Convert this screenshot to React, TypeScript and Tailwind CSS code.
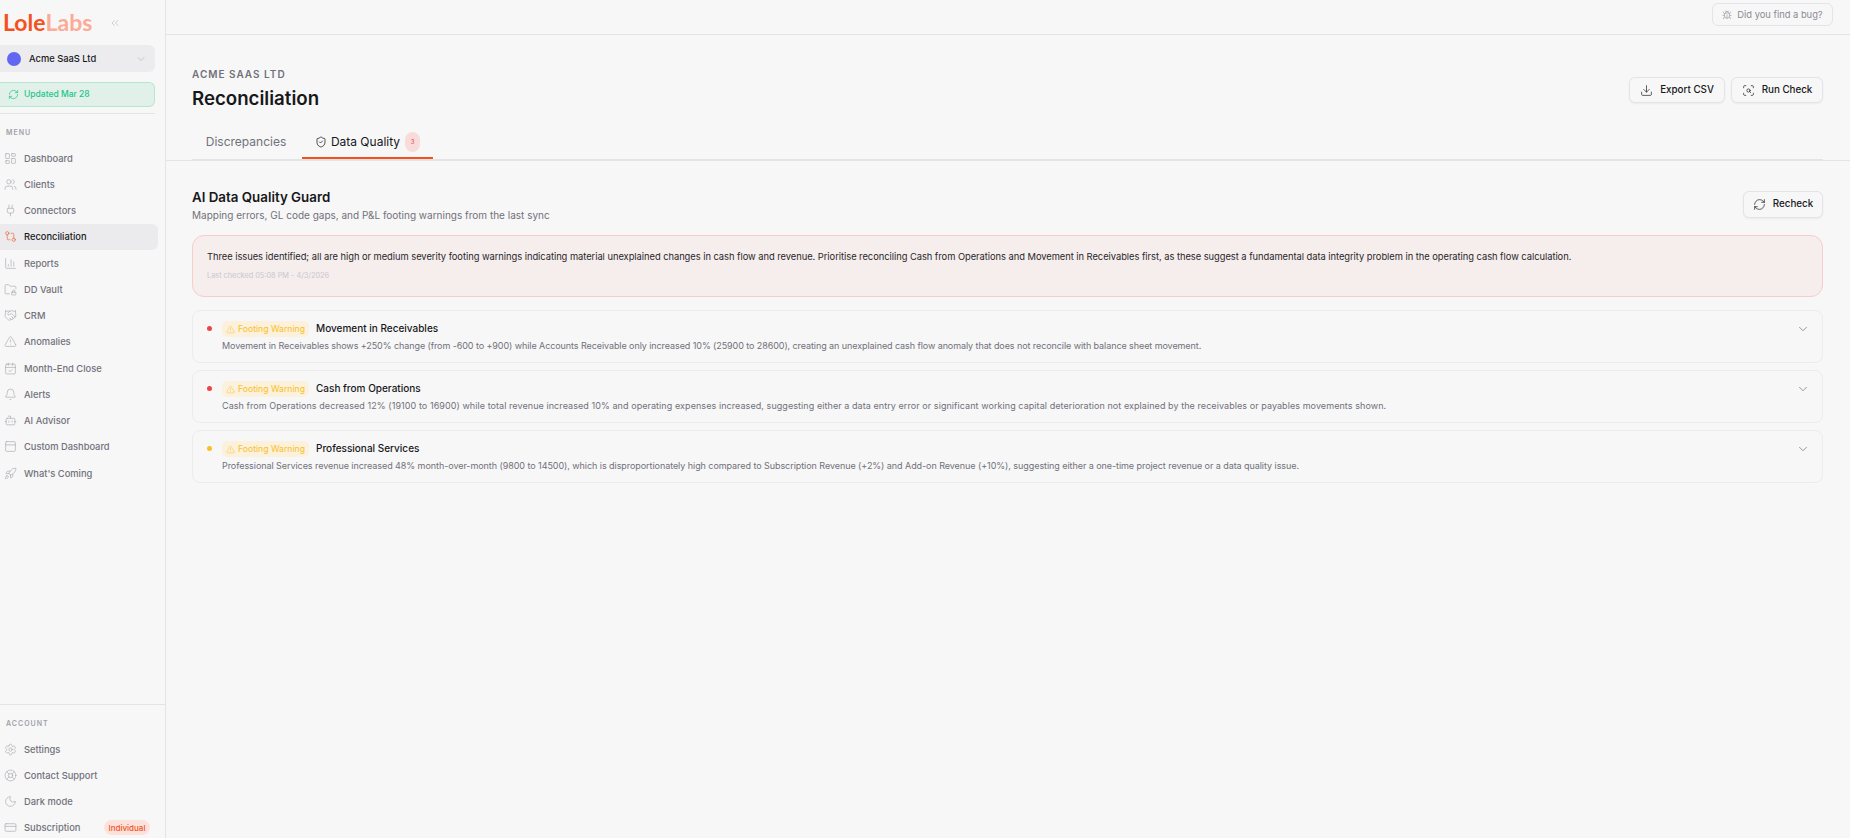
import {
  AlertTriangle,
  BarChart3,
  Bell,
  Bot,
  Bug,
  CalendarCheck,
  ChevronDown,
  ChevronsLeft,
  CreditCard,
  Download,
  FolderLock,
  GitCompare,
  Handshake,
  LayoutDashboard,
  LifeBuoy,
  Moon,
  PanelTop,
  Plug,
  RefreshCw,
  Rocket,
  ScanSearch,
  Settings,
  ShieldCheck,
  Users,
} from "lucide-react"

const menu = [
  { label: "Dashboard", icon: LayoutDashboard },
  { label: "Clients", icon: Users },
  { label: "Connectors", icon: Plug },
  { label: "Reconciliation", icon: GitCompare, active: true },
  { label: "Reports", icon: BarChart3 },
  { label: "DD Vault", icon: FolderLock },
  { label: "CRM", icon: Handshake },
  { label: "Anomalies", icon: AlertTriangle },
  { label: "Month-End Close", icon: CalendarCheck },
  { label: "Alerts", icon: Bell },
  { label: "AI Advisor", icon: Bot },
  { label: "Custom Dashboard", icon: PanelTop },
  { label: "What's Coming", icon: Rocket },
]

const account = [
  { label: "Settings", icon: Settings },
  { label: "Contact Support", icon: LifeBuoy },
  { label: "Dark mode", icon: Moon },
]

const issues = [
  {
    dot: "bg-[#ef4444]",
    spacing: "tracking-[-0.08px]",
    title: "Movement in Receivables",
    text: "Movement in Receivables shows +250% change (from -600 to +900) while Accounts Receivable only increased 10% (25900 to 28600), creating an unexplained cash flow anomaly that does not reconcile with balance sheet movement.",
  },
  {
    dot: "bg-[#ef4444]",
    spacing: "tracking-[0.07px]",
    title: "Cash from Operations",
    text: "Cash from Operations decreased 12% (19100 to 16900) while total revenue increased 10% and operating expenses increased, suggesting either a data entry error or significant working capital deterioration not explained by the receivables or payables movements shown.",
  },
  {
    dot: "bg-[#fbbf24]",
    spacing: "tracking-[-0.06px]",
    title: "Professional Services",
    text: "Professional Services revenue increased 48% month-over-month (9800 to 14500), which is disproportionately high compared to Subscription Revenue (+2%) and Add-on Revenue (+10%), suggesting either a one-time project revenue or a data quality issue.",
  },
]

function NavItem({ label, icon: Icon, active }: { label: string; icon: typeof Users; active?: boolean }) {
  return (
    <div
      className={`flex h-[26.25px] w-[158px] items-center gap-[7px] rounded-r-md pl-[4px] text-[9.33px] font-medium ${
        active ? "bg-[#ebebed] text-[#18181b]" : "text-[#71717a]"
      }`}
    >
      <Icon size={13} strokeWidth={1.1} className={active ? "text-[#f4511e]" : "text-[#a1a1aa]"} />
      <span className="pt-[1px]">{label}</span>
    </div>
  )
}

function Sidebar() {
  return (
    <aside className="h-[838px] w-[166px] shrink-0 overflow-hidden border-r border-[#e4e4e7]">
      <div className="flex h-[841px] flex-col">
        <div className="flex h-[45px] items-center">
          <div className="ml-[3px] flex h-[24px] items-center text-[23px] leading-none font-bold [font-family:Lato,sans-serif]">
            <span className="text-[#f4511e]">Lole</span>
            <span className="text-[#fbab96]">Labs</span>
          </div>
          <ChevronsLeft size={12} strokeWidth={1.25} className="ml-[17px] text-[#b4b4bb]" />
        </div>
        <div className="flex h-[27px] w-[155px] items-center rounded-r-md bg-[#ececee] pl-[7px] pr-[8px]">
          <span className="h-[14px] w-[14px] rounded-full bg-[#6366f1]" />
          <span className="ml-[8px] flex-1 text-[9.33px] font-medium text-[#18181b]">Acme SaaS Ltd</span>
          <ChevronDown size={12} strokeWidth={1.1} className="text-[#a1a1aa]" />
        </div>
        <div className="mt-[10px] flex h-[25px] w-[155px] items-center gap-[5px] rounded-r-md border border-l-0 border-[#b3e7d1] bg-[#e1f1ea] pl-[8px] text-[8.5px] font-medium text-[#22c58b]">
          <RefreshCw size={11} strokeWidth={1.5} />
          <span>Updated Mar 28</span>
        </div>
        <div className="mt-[6px] h-px w-[155px] bg-[#e4e4e7]" />
        <div className="mt-[12px] h-[13px] pl-[6px] text-[7px] leading-[13px] font-semibold tracking-[1px] text-[#a1a1aa]">MENU</div>
        <nav className="mt-[6px] flex flex-col">
          {menu.map((item) => (
            <NavItem key={item.label} {...item} />
          ))}
        </nav>
        <div className="mt-auto border-t border-[#e4e4e7] pt-[12px]">
          <div className="h-[13px] pl-[6px] text-[7px] leading-[13px] font-semibold tracking-[1px] text-[#a1a1aa]">ACCOUNT</div>
          <div className="mt-[6px] flex flex-col">
            {account.map((item) => (
              <NavItem key={item.label} {...item} />
            ))}
            <div className="flex h-[26.25px] items-center pl-[4px] text-[9.33px] font-medium text-[#71717a]">
              <CreditCard size={13} strokeWidth={1.1} className="text-[#a1a1aa]" />
              <span className="ml-[7px] w-[80px] pt-[1px]">Subscription</span>
              <span className="flex h-[15px] w-[46px] items-center justify-center rounded-full bg-[#fbe3dc] text-[8px] font-medium text-[#f4511e]">
                Individual
              </span>
            </div>
          </div>
        </div>
      </div>
    </aside>
  )
}

function OutlineButton({ icon: Icon, label, className }: { icon: typeof Users; label: string; className: string }) {
  return (
    <button className={`flex items-center justify-center gap-[7px] rounded-md border border-[#e4e4e7] bg-[#f7f7f7] text-[9.8px] font-medium text-[#18181b] shadow-[0_1px_2px_rgba(0,0,0,0.05)] ${className}`}>
      <Icon size={13} strokeWidth={1.25} />
      {label}
    </button>
  )
}

function IssueCard({ dot, spacing, title, text }: { dot: string; spacing: string; title: string; text: string }) {
  return (
    <div className="relative h-[53px] rounded-lg border border-[#ececee] pl-[29px] pt-[10px]">
      <span className={`absolute left-[14px] top-[15px] h-[5px] w-[5px] rounded-full ${dot}`} />
      <div className="flex h-[16px] items-center">
        <span className="flex h-[16px] w-[87px] items-center justify-center gap-[3px] rounded-[5px] bg-[#fcf1dc] text-[8.67px] text-[#fbbf24]">
          <AlertTriangle size={9} strokeWidth={1.25} />
          Footing Warning
        </span>
        <span className="ml-[7px] pb-[1px] text-[10px] font-medium text-[#18181b]">{title}</span>
      </div>
      <p className={`mt-[2px] text-[9px] leading-[14px] text-[#71717a] ${spacing}`}>{text}</p>
      <ChevronDown size={14} strokeWidth={1.25} className="absolute right-[12px] top-[11px] text-[#71717a]" />
    </div>
  )
}

export default function App() {
  return (
    <div className="flex h-[838px] w-[1850px] overflow-hidden bg-[#f7f7f7] [font-family:Inter,sans-serif]">
      <Sidebar />
      <main className="min-w-0 flex-1">
        <div className="flex h-[35px] items-start justify-end border-b border-[#e4e4e7] pr-[17px] pt-[3px]">
          <button className="flex h-[23px] w-[121px] items-center justify-center gap-[5px] rounded-md border border-[#e4e4e7] text-[9.33px] text-[#8a8a93]">
            <Bug size={10} strokeWidth={1.25} />
            Did you find a bug?
          </button>
        </div>
        <div className="pl-[26px] pr-[27px]">
          <div className="relative pt-[33px]">
            <div className="text-[10px] leading-[12px] font-semibold tracking-[1px] text-[#71717a]">ACME SAAS LTD</div>
            <h1 className="mt-[5px] text-[18.67px] leading-[28px] font-semibold text-[#18181b]">Reconciliation</h1>
            <div className="absolute right-0 top-[42px] flex gap-[6px]">
              <OutlineButton icon={Download} label="Export CSV" className="h-[26px] w-[96px]" />
              <OutlineButton icon={ScanSearch} label="Run Check" className="h-[26px] w-[92px]" />
            </div>
          </div>
          <div className="mt-[14px] flex h-[33px] border-b border-[#e4e4e7]">
            <div className="flex h-[32px] w-[108px] items-center justify-center pb-[3px] text-[12px] text-[#71717a]">Discrepancies</div>
            <div className="ml-[2px] flex h-[32px] w-[131px] items-center justify-center gap-[4px] border-b-2 border-[#f4511e] pb-[1px] text-[12px] text-[#18181b]">
              <ShieldCheck size={12} strokeWidth={1.5} />
              Data Quality
              <span className="ml-[1px] flex h-[20px] w-[15px] items-center justify-center rounded-full bg-[#f8dcdc] text-[6px] text-[#ef4444]">3</span>
            </div>
          </div>
        </div>
        <div className="h-px bg-[#e4e4e7]" />
        <div className="pl-[26px] pr-[27px]">
          <div className="mt-[27px] flex items-start justify-between">
            <div>
              <h2 className="text-[13.33px] leading-[18px] font-semibold text-[#18181b]">AI Data Quality Guard</h2>
              <p className="mt-[1px] text-[10px] leading-[16px] text-[#71717a]">Mapping errors, GL code gaps, and P&amp;L footing warnings from the last sync</p>
            </div>
            <OutlineButton icon={RefreshCw} label="Recheck" className="mt-[3px] h-[27px] w-[80px]" />
          </div>
          <div className="mt-[12px] h-[62px] rounded-xl border border-[#f8cccc] bg-[#f6eded] pl-[14px] pt-[14px]">
            <p className="text-[9.33px] leading-[14px] tracking-[-0.033px] text-[#27272a]">
              Three issues identified; all are high or medium severity footing warnings indicating material unexplained changes in cash flow and revenue. Prioritise reconciling Cash from Operations and Movement in Receivables first, as these suggest a fundamental data integrity problem in the operating cash flow calculation.
            </p>
            <p className="mt-[7px] text-[7.33px] leading-[10px] text-[#c8c8cd]">Last checked 05:08 PM - 4/3/2026</p>
          </div>
          <div className="mt-[13px] flex flex-col gap-[7px]">
            {issues.map((issue) => (
              <IssueCard key={issue.title} {...issue} />
            ))}
          </div>
        </div>
      </main>
    </div>
  )
}
